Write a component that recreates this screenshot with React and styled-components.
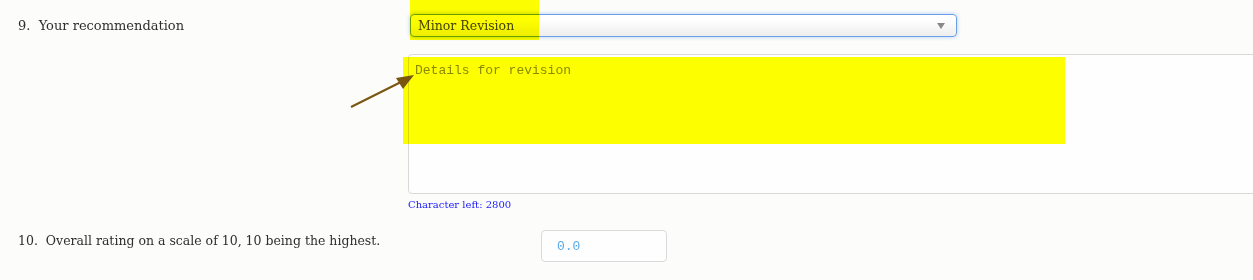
import React from "react";
import styled, { createGlobalStyle } from "styled-components";

const Global = createGlobalStyle`
  html, body { margin: 0; padding: 0; background: #fcfdfb; overflow: hidden; }
  body { font-family: "DejaVu Serif", "Liberation Serif", serif; }
`;

const Page = styled.div`
  position: relative;
  width: 1253px;
  height: 280px;
  overflow: hidden;
  padding-top: 14px;
  box-sizing: border-box;
`;

const Row = styled.div`
  display: flex;
  align-items: ${(p) => p.$align || "center"};
  padding-left: 18px;
`;

const Label = styled.div`
  width: ${(p) => p.$w}px;
  flex: none;
  margin-top: ${(p) => p.$top || 0}px;
  font-size: ${(p) => p.$size || 13}px;
  color: #2e2e2e;
  white-space: pre;
`;

const Select = styled.div`
  width: 547px;
  height: 23px;
  border: 1px solid #6b9fe6;
  border-radius: 4px;
  background: linear-gradient(#ffffff 20%, #eeeeee 100%);
  box-shadow: 0 0 4px rgba(82, 140, 230, 0.45);
  display: flex;
  align-items: center;
  justify-content: space-between;
  padding: 0 11px 0 7px;
  box-sizing: border-box;
  font-size: 12.5px;
  color: #444;
`;

const Caret = styled.span`
  width: 0;
  height: 0;
  border-left: 4px solid transparent;
  border-right: 4px solid transparent;
  border-top: 6px solid #888;
`;

const Field = styled.div`
  margin-left: 408px;
  margin-top: 17px;
  width: 880px;
  height: 140px;
  border: 1px solid #d9d9d9;
  border-radius: 4px;
  background: #fdfefd;
  padding: 8px 6px;
  box-sizing: border-box;
  font-family: "Liberation Mono", monospace;
  font-size: 13px;
  color: #8a8a8a;
`;

const CharLeft = styled.div`
  margin-left: 408px;
  margin-top: 5px;
  font-size: 10px;
  color: #1a1aff;
`;

const NumberInput = styled.div`
  width: 126px;
  height: 32px;
  border: 1px solid #dadada;
  border-radius: 4px;
  background: #fdfefd;
  display: flex;
  align-items: center;
  padding-left: 15px;
  box-sizing: border-box;
  font-family: "Liberation Mono", monospace;
  font-size: 13px;
  color: #5aa9ea;
`;

const Row10 = styled(Row)`
  margin-top: 20px;
`;

const Highlight = styled.div`
  position: absolute;
  background: #ffff00;
  mix-blend-mode: multiply;
  pointer-events: none;
`;

const ArrowSvg = styled.svg`
  position: absolute;
  left: 345px;
  top: 68px;
  overflow: visible;
`;

export default function App() {
  return (
    <Page>
      <Global />
      <Row>
        <Label $w={392}>{"9.  Your recommendation"}</Label>
        <Select>
          <span>Minor Revision</span>
          <Caret />
        </Select>
      </Row>
      <Field>Details for revision</Field>
      <CharLeft>Character left: 2800</CharLeft>
      <Row10 $align="flex-start">
        <Label $w={523} $size={12.5} $top={3}>
          {"10.  Overall rating on a scale of 10, 10 being the highest."}
        </Label>
        <NumberInput>0.0</NumberInput>
      </Row10>

      <Highlight style={{ left: 410, top: 0, width: 129, height: 40 }} />
      <Highlight style={{ left: 403, top: 57, width: 662, height: 87 }} />
      <ArrowSvg width="80" height="50">
        <line x1="6" y1="39" x2="56" y2="14" stroke="#7a5510" strokeWidth="2" />
        <polygon points="69,7 51,10 58,21" fill="#7a5510" />
      </ArrowSvg>
    </Page>
  );
}
